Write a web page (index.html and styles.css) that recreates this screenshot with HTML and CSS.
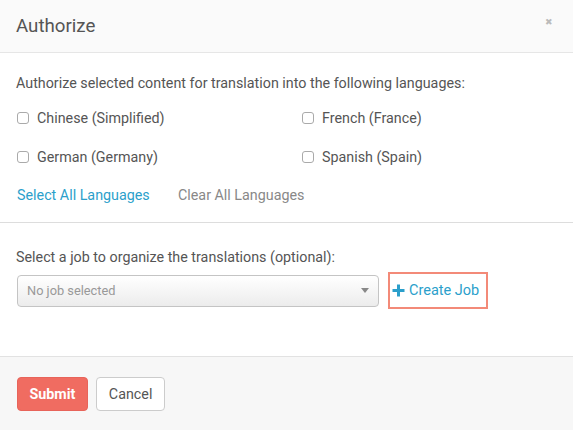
FILE: index.html
```html
<!DOCTYPE html>
<html>
<head>
<meta charset="utf-8">
<link rel="stylesheet" href="styles.css">
</head>
<body>
<div class="modal">
  <div class="header">
    <h1 class="title">Authorize</h1>
    <span class="close">&#10006;</span>
  </div>
  <div class="section langs">
    <p class="intro">Authorize selected content for translation into the following languages:</p>
    <div class="grid">
      <label class="check"><span class="box"></span>Chinese (Simplified)</label>
      <label class="check"><span class="box"></span>French (France)</label>
      <label class="check"><span class="box"></span>German (Germany)</label>
      <label class="check"><span class="box"></span>Spanish (Spain)</label>
    </div>
    <div class="links">
      <a class="link-primary">Select All Languages</a>
      <a class="link-muted">Clear All Languages</a>
    </div>
  </div>
  <div class="section job">
    <p class="job-label">Select a job to organize the translations (optional):</p>
    <div class="job-row">
      <div class="select"><span>No job selected</span><span class="caret"></span></div>
      <div class="create"><svg class="plus" width="13" height="13" viewBox="0 0 13 13"><path d="M6.5 0.5V12.5M0.5 6.5H12.5" stroke="#2b9fcb" stroke-width="3"/></svg>Create Job</div>
    </div>
  </div>
  <div class="footer">
    <button class="btn btn-submit">Submit</button>
    <button class="btn btn-cancel">Cancel</button>
  </div>
</div>
</body>
</html>
```
FILE: styles.css
```css
* { box-sizing: border-box; }
html, body { margin: 0; padding: 0; }
body {
  width: 573px;
  height: 430px;
  overflow: hidden;
  font-family: Roboto, "Liberation Sans", sans-serif;
  color: #555;
  background: #fff;
}
.modal { display: flex; flex-direction: column; height: 430px; }
.header {
  height: 53px;
  background: #fafafa;
  border-bottom: 1px solid #e6e6e6;
  display: flex;
  align-items: center;
  justify-content: space-between;
  padding: 0 20px 0 16px;
}
.title { margin: 0; font-size: 18.7px; font-weight: 400; color: #555; }
.close { font-size: 9px; color: #bbb; margin-top: -8px; }
.section { padding: 0 16px; }
.langs { padding-top: 20px; padding-bottom: 17px; border-bottom: 1px solid #ddd; }
.intro { margin: 0 0 15px; font-size: 14.3px; line-height: 20px; }
.grid { display: grid; grid-template-columns: 285px 1fr; row-gap: 19px; }
.check { display: flex; align-items: center; font-size: 14.3px; line-height: 20px; padding-left: 1px; }
.box {
  width: 12px; height: 12px;
  border: 1px solid #aaa;
  border-radius: 3px;
  margin-right: 8px;
  background: #fff;
}
.links { display: flex; margin-top: 18px; font-size: 14.3px; line-height: 20px; padding-left: 1px; }
.link-primary { color: #2b9fcb; width: 161px; }
.link-muted { color: #888; }
.job { padding-top: 24px; padding-bottom: 47px; }
.job-label { margin: 0 0 5px; font-size: 14.3px; line-height: 20px; }
.job-row { display: flex; align-items: center; gap: 9px; padding-left: 1px; }
.select {
  width: 362px; height: 32px;
  border: 1px solid #c4c4c4;
  border-radius: 4px;
  background: linear-gradient(#fff, #ececec);
  display: flex; align-items: center; justify-content: space-between;
  padding: 0 9px;
  font-size: 12.8px; color: #999;
}
.caret {
  width: 0; height: 0;
  border-left: 4px solid transparent;
  border-right: 4px solid transparent;
  border-top: 5px solid #888;
}
.create {
  width: 100px; height: 37px;
  border: 2px solid #f38a78;
  display: flex; align-items: center;
  padding-left: 2px;
  color: #2b9fcb; font-size: 14.5px;
}
.plus { margin-right: 4px; flex: none; }
.footer {
  flex: 1;
  background: #f7f7f7;
  border-top: 1px solid #e2e2e2;
  padding: 20px 16px 0 17px;
  display: flex; align-items: flex-start; gap: 8px;
}
.btn {
  height: 34px;
  border-radius: 4px;
  font-family: inherit;
  font-size: 14.3px;
  padding: 0 11.5px;
}
.btn-submit { background: #f06c61; border: 1px solid #e8645a; color: #fff; font-weight: 700; }
.btn-cancel { background: #fff; border: 1px solid #ccc; color: #555; padding: 0 12px; }
```
